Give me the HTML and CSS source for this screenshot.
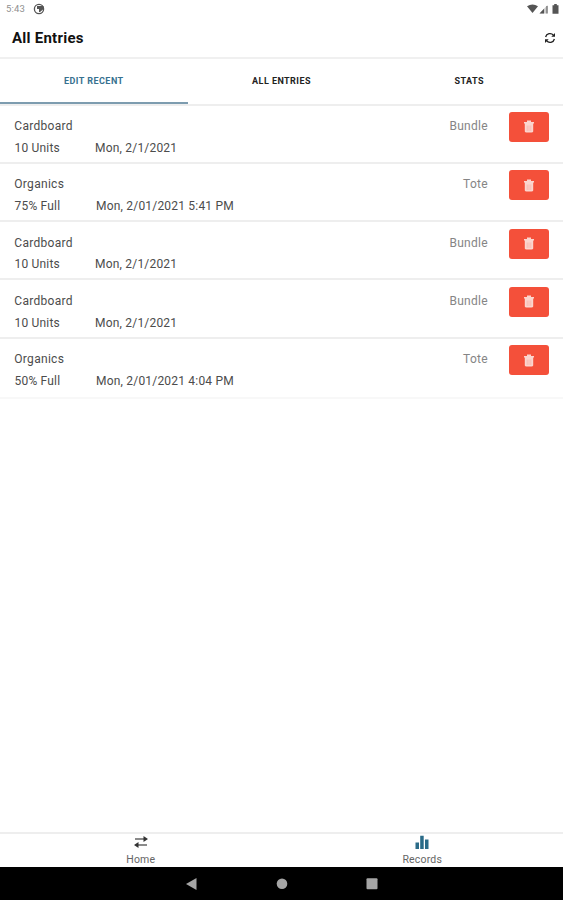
FILE: index.html
```html
<!DOCTYPE html>
<html lang="en">
<head>
<meta charset="utf-8">
<title>All Entries</title>
<link rel="stylesheet" href="styles.css">
</head>
<body>
<svg class="defs" aria-hidden="true">
  <symbol id="trash" viewBox="0 0 10 13">
    <path d="M0 2h3V.5h4V2h3v1.500H0zM.8 3.500h8.400v8Q9 12.500 7.500 12.500h-5Q1 12.500 .8 11.500z" fill="#fbd5ce"/>
    <path d="M3.200 5.500v5.500M5 5.500v5.500M6.800 5.500v5.500" stroke="#f7a99d" stroke-width=".6"/>
  </symbol>
</svg>
<div class="app">
  <div class="status">
    <span class="clock">5:43</span>
    <svg class="notice" width="12" height="12" viewBox="0 0 12 12"><circle cx="6" cy="6" r="4.600" fill="#fff" stroke="#555" stroke-width="1.300"/><path d="M4 3h6.500v3L7 9H6V6H4z" fill="#555"/></svg>
    <svg class="signals" width="34" height="12" viewBox="0 0 34 12"><path d="M0 3.300Q5.500-.5 11 3.300L5.500 10z" fill="#555"/><path d="M12.500 10.500L20.500 2v8.500z" fill="#ccc"/><path d="M12.500 10.500L17 5.700v4.800zM19.500 3h1v7.500h-1z" fill="#555"/><path d="M25.500 2.200h1.700V1h2.600v1.200h1.700v8.600h-6z" fill="#555"/></svg>
  </div>
  <header class="header">
    <h1>All Entries</h1>
    <svg width="12" height="12" viewBox="0 0 12 12"><path d="M1.600 5A4.500 4.500 0 0 1 9.500 3.300M10.400 7A4.500 4.500 0 0 1 2.500 8.700" fill="none" stroke="#222" stroke-width="1.300"/><path d="M11 1v3.800H7.300zM1 11V7.200h3.700z" fill="#222"/></svg>
  </header>
  <nav class="tabs">
    <a class="tab active">EDIT RECENT</a>
    <a class="tab">ALL ENTRIES</a>
    <a class="tab">STATS</a>
  </nav>
  <main class="list">
    <article class="row">
      <div class="info"><div class="name">Cardboard</div><div class="detail"><span class="amount">10 Units</span><span>Mon, 2/1/2021</span></div></div>
      <span class="kind">Bundle</span><button class="delete" aria-label="Delete"><svg width="10" height="13"><use href="#trash"/></svg></button>
    </article>
    <article class="row">
      <div class="info"><div class="name">Organics</div><div class="detail timed"><span class="amount">75% Full</span><span>Mon, 2/01/2021 5:41 PM</span></div></div>
      <span class="kind">Tote</span><button class="delete" aria-label="Delete"><svg width="10" height="13"><use href="#trash"/></svg></button>
    </article>
    <article class="row">
      <div class="info"><div class="name">Cardboard</div><div class="detail"><span class="amount">10 Units</span><span>Mon, 2/1/2021</span></div></div>
      <span class="kind">Bundle</span><button class="delete" aria-label="Delete"><svg width="10" height="13"><use href="#trash"/></svg></button>
    </article>
    <article class="row">
      <div class="info"><div class="name">Cardboard</div><div class="detail"><span class="amount">10 Units</span><span>Mon, 2/1/2021</span></div></div>
      <span class="kind">Bundle</span><button class="delete" aria-label="Delete"><svg width="10" height="13"><use href="#trash"/></svg></button>
    </article>
    <article class="row">
      <div class="info"><div class="name">Organics</div><div class="detail timed"><span class="amount">50% Full</span><span>Mon, 2/01/2021 4:04 PM</span></div></div>
      <span class="kind">Tote</span><button class="delete" aria-label="Delete"><svg width="10" height="13"><use href="#trash"/></svg></button>
    </article>
  </main>
  <nav class="bottom">
    <a class="dest"><svg width="14" height="14" viewBox="0 0 14 14"><path d="M1 3.300h9v1.500H1zM4 9.300h9v1.500H4z" fill="#666"/><path d="M9.500 1L14 4 9.500 7zM4.500 7v6L0 10z" fill="#333"/></svg><span>Home</span></a>
    <a class="dest"><svg width="14" height="14" viewBox="0 0 14 14"><path d="M.5 7.500h3.500V14H.5zM5.200.8h3.500V14H5.200zM10 4.500h3.500V14H10z" fill="#2a6b88"/></svg><span>Records</span></a>
  </nav>
  <div class="system">
    <svg width="12" height="14" viewBox="0 0 12 14"><path d="M0 7L10.500 1v12z" fill="#a5a5a5"/></svg>
    <svg width="12" height="14" viewBox="0 0 12 14"><circle cx="6" cy="6.700" r="5.300" fill="#a5a5a5"/></svg>
    <svg width="12" height="14" viewBox="0 0 12 14"><rect x=".5" y="1.200" width="11" height="11" rx="1" fill="#a5a5a5"/></svg>
  </div>
</div>
</body>
</html>
```
FILE: styles.css
```css
* { box-sizing: border-box; }
body { margin: 0; background: #fff; color: #4c4c4c; font-family: Roboto, "Liberation Sans", sans-serif; }
.defs { display: none; }
.app { display: flex; flex-direction: column; width: 563px; height: 900px; overflow: hidden; }
.status { display: flex; align-items: center; height: 18px; padding: 0 2px 0 6px; }
.clock { width: 27px; color: #909090; font-size: 9.500px; letter-spacing: .2px; line-height: 18px; }
.signals { margin-left: auto; }
.header { display: flex; align-items: center; justify-content: space-between; height: 41px; padding: 0 7px 0 12px; border-bottom: 2px solid #f0f0f0; }
h1 { margin: 0; padding-top: 1px; color: #111; font-size: 15px; font-weight: 700; line-height: 20px; letter-spacing: .25px; }
.tabs { display: flex; height: 47px; border-bottom: 2px solid #eee; }
.tab { flex: 1; border-bottom: 2px solid transparent; color: #222; font-size: 9px; font-weight: 700; line-height: 45px; letter-spacing: .45px; text-align: center; }
.tab.active { border-color: #7d9caf; color: #37718f; }
.list { margin-top: -.700px; }
.row { display: flex; height: 58.300px; padding: 6.600px 14px 0; border-bottom: 2px solid #eee; font-size: 12px; letter-spacing: .3px; }
.row:last-child { height: 60px; border-color: #f8f8f8; }
.info { flex: 1; padding-top: 4px; line-height: 21.800px; }
.name { padding-left: .3px; }
.detail { display: flex; letter-spacing: .2px; }
.amount { width: 81px; padding-left: .5px; }
.timed .amount { width: 82px; }
.kind { padding-top: 4px; color: #858585; line-height: 21.800px; }
.delete { display: flex; align-items: center; justify-content: center; width: 40px; height: 30px; margin-left: 21px; padding: 0; border: 0; border-radius: 3px; background: #f4503a; }
.bottom { display: flex; height: 35px; margin-top: auto; border-top: 2px solid #eee; }
.dest { display: flex; flex: 1; flex-direction: column; align-items: center; padding-top: 1px; color: #666; font-size: 10.500px; line-height: 19px; letter-spacing: .2px; }
.dest svg { flex: none; }
.dest span { padding-top: 1px; }
.system { display: flex; align-items: center; justify-content: center; gap: 78px; height: 33px; background: #000; }
```
